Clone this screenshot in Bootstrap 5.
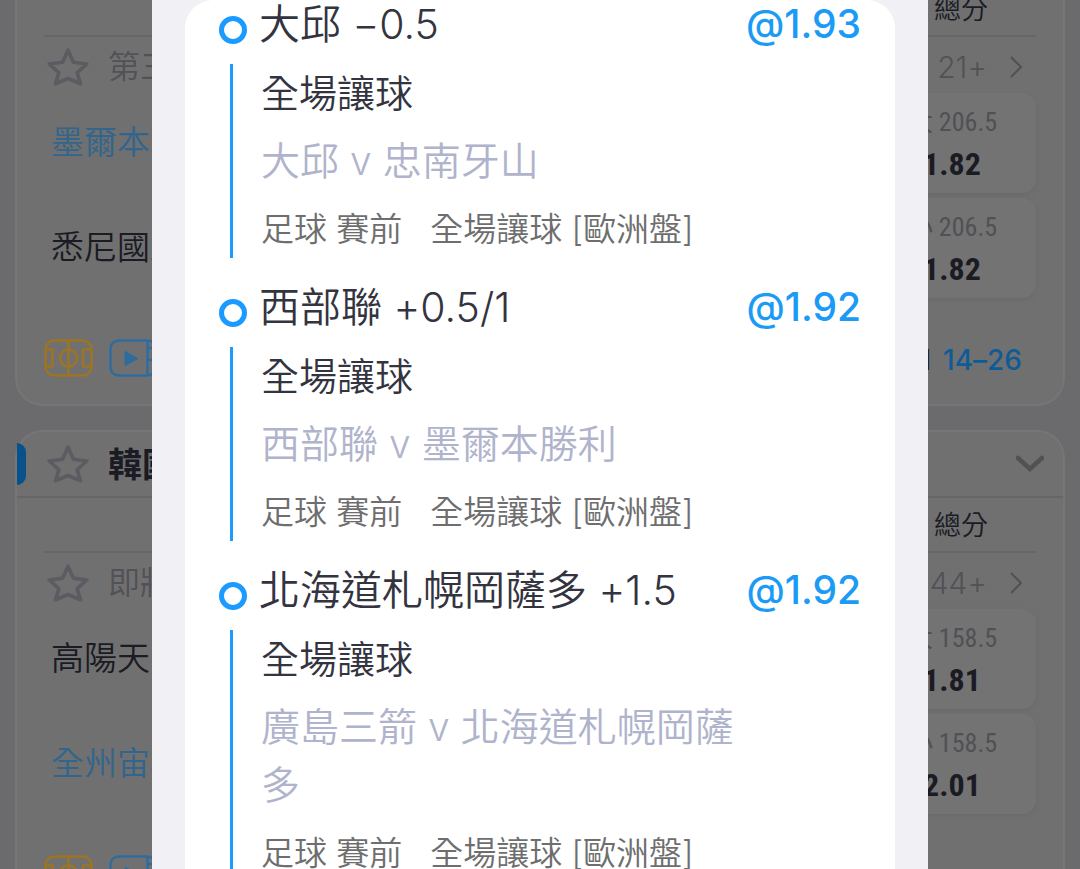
<!DOCTYPE html>
<html lang="zh-Hant">
<head>
<meta charset="utf-8">
<meta name="viewport" content="width=device-width, initial-scale=1">
<title>投注單</title>
<link href="https://cdn.jsdelivr.net/npm/bootstrap@5.3.0/dist/css/bootstrap.min.css" rel="stylesheet">
<style>
  body { font-family: Inter, "Noto Sans CJK TC", sans-serif; font-feature-settings: "calt" 0; background: #6b6b6e; color: #1b1b24; }
  .screen { height: 100vh; overflow: hidden; }
  button { background: none; border: 0; padding: 0; color: inherit; line-height: 0; }
  svg { display: block; fill: none; stroke: currentColor; }

  /* dimmed match list behind the slip */
  .league { background: #707070; border: 2px solid #767677; border-radius: 28px; margin: 0 15px; }
  .league.scrolled { margin-top: -18px; border-top: 0; border-radius: 0 0 28px 28px; }
  .league-head { height: 66px; padding-right: 19px; border-bottom: 2px solid #666668; font-size: 34px; font-weight: 700; }
  .marker { width: 9px; height: 42px; background: #07528a; border-radius: 0 10px 10px 0; margin-right: 19px; }
  .league-body { padding: 0 27px; }
  .colhead { height: 55px; border-bottom: 2px solid #666668; font-size: 27px; line-height: 55px; font-weight: 350; padding-right: 48px; text-align: right; }
  .event-row { height: 56px; padding: 4px 14px 0 1px; font-size: 32px; font-weight: 350; color: #515156; }
  .count { font-size: 30px; font-weight: 350; margin-right: 23px; }
  .star { color: #5b5b62; margin-right: 17px; }
  .team { font-size: 33px; font-weight: 350; padding-left: 7px; line-height: 98px; }
  .team.away { color: #31658c; }
  .pairs { display: grid; row-gap: 5px; }
  .oddsbox { width: 168px; height: 100px; background: #737373; border-radius: 14px; box-shadow: 0 2px 4px #6a6a6a; font-family: "Roboto Condensed", "Liberation Sans Narrow", "Noto Sans CJK TC", sans-serif; padding-top: 9px; }
  .oddsbox span { font-size: 26px; line-height: 40px; color: #505055; }
  .oddsbox strong { font-size: 32px; line-height: 44px; }
  .foot { height: 106px; padding-top: 14px; padding-right: 14px; font-size: 28px; font-weight: 500; }
  .court { color: #9c7424; margin-right: 16px; }
  .video { color: #2f6c9e; }
  .period { color: #0d5c98; }

  /* slip */
  .overlay { position: absolute; inset: 0; padding: 0 152px; overflow: hidden; }
  .slip { background: #f0f0f5; min-height: 100%; padding: 0 33px; }
  .slip-inner { background: #fff; border-radius: 28px 28px 0 0; padding: 0 34px; color: #33343f; min-height: 100vh; }
  .bet { padding-bottom: 25px; }
  .bet-title { font-size: 41px; line-height: 48px; font-weight: 350; margin-bottom: 16px; }
  .dot { width: 28px; height: 28px; border: 5px solid #1b9bff; border-radius: 50%; margin: 16px 12px 0 0; }
  .price { color: #1b9bf5; font-size: 39px; font-weight: 500; }
  .bet-body { margin-left: 11px; border-left: 3px solid #1b9bff; padding-left: 28px; display: grid; row-gap: 10px; font-size: 38px; line-height: 58px; font-weight: 350; }
  .teams { color: #b0b3cc; font-size: 39px; padding-right: 108px; }
  .meta { color: #6e6e6e; font-size: 33px; white-space: pre; }
</style>
</head>
<body>
<svg class="d-none">
  <symbol id="i-star" viewBox="0 0 44 40"><path d="M22 4l5.200 11.500 12.800 1.600-9.300 8.400 3.300 10.500-12-5-12 5 3.300-10.500L4 17.100l12.800-1.600z" stroke-width="3.500" stroke-linejoin="round"/></symbol>
  <symbol id="i-court" viewBox="0 0 49 38"><rect x="1.500" y="1.500" width="46" height="35" rx="9" stroke-width="2.500"/><path d="M24.500 2v34M2 10.500h6.500v17H2M47 10.500h-8v17h8" stroke-width="2.500"/><circle cx="24.500" cy="19" r="8.500" stroke-width="2.500"/></symbol>
  <symbol id="i-video" viewBox="0 0 56 38"><rect x="1.500" y="1.500" width="45" height="35" rx="8" stroke-width="2.500"/><path d="M38.500 2v34M39 9h9M39 21h5V12" stroke-width="2.500"/><path d="M16.500 13l11.500 6.500-11.500 6.500z" fill="currentColor" stroke-width="2" stroke-linejoin="round"/></symbol>
  <symbol id="i-next" viewBox="0 0 12 22"><path d="M1 1l10 10L1 21" stroke-width="2"/></symbol>
</svg>

<div class="screen position-relative">
  <main>
    <section class="league scrolled">
      <div class="league-body">
        <div class="colhead">總分</div>
        <div class="event-row d-flex align-items-center">
          <button class="star" aria-label="收藏"><svg width="46" height="42"><use href="#i-star"/></svg></button>
          <span>第三節</span><span class="count ms-auto">21+</span>
          <svg width="12" height="22"><use href="#i-next"/></svg>
        </div>
        <div class="pairs">
          <div class="d-flex justify-content-between"><div class="team away">墨爾本聯</div><div class="oddsbox d-flex flex-column align-items-center"><span>大 206.5</span><strong>1.82</strong></div></div>
          <div class="d-flex justify-content-between"><div class="team">悉尼國王</div><div class="oddsbox d-flex flex-column align-items-center"><span>小 206.5</span><strong>1.82</strong></div></div>
        </div>
        <div class="foot d-flex align-items-center">
          <svg class="court" width="49" height="38"><use href="#i-court"/></svg>
          <svg class="video" width="56" height="38"><use href="#i-video"/></svg>
          <span class="ms-auto me-2 pe-1 pt-1">1</span><span class="period pt-1">14–26</span>
        </div>
      </div>
    </section>

    <section class="league mt-4">
      <div class="league-head d-flex align-items-center">
        <span class="marker"></span>
        <button class="star" aria-label="收藏"><svg width="46" height="42"><use href="#i-star"/></svg></button>
        <span>韓國</span>
        <button class="ms-auto" aria-label="收合"><svg width="28" height="18" viewBox="0 0 28 18"><path d="M2 3l12 11L26 3" stroke="#525255" stroke-width="4.500" stroke-linecap="round"/></svg></button>
      </div>
      <div class="league-body">
        <div class="colhead">總分</div>
        <div class="event-row d-flex align-items-center">
          <button class="star" aria-label="收藏"><svg width="46" height="42"><use href="#i-star"/></svg></button>
          <span>即將</span><span class="count ms-auto">44+</span>
          <svg width="12" height="22"><use href="#i-next"/></svg>
        </div>
        <div class="pairs">
          <div class="d-flex justify-content-between"><div class="team">高陽天空</div><div class="oddsbox d-flex flex-column align-items-center"><span>大 158.5</span><strong>1.81</strong></div></div>
          <div class="d-flex justify-content-between"><div class="team away">全州宙斯</div><div class="oddsbox d-flex flex-column align-items-center"><span>小 158.5</span><strong>2.01</strong></div></div>
        </div>
        <div class="foot d-flex align-items-center">
          <svg class="court" width="49" height="38"><use href="#i-court"/></svg>
          <svg class="video" width="56" height="38"><use href="#i-video"/></svg>
        </div>
      </div>
    </section>
  </main>

  <div class="overlay" role="dialog" aria-label="投注單">
    <div class="slip">
      <div class="slip-inner">
        <article class="bet">
          <div class="bet-title d-flex"><span class="dot"></span><span>大邱 −0.5</span><span class="price ms-auto">@1.93</span></div>
          <div class="bet-body"><div>全場讓球</div><div class="teams">大邱 v 忠南牙山</div><div class="meta">足球 賽前   全場讓球 [歐洲盤]</div></div>
        </article>
        <article class="bet">
          <div class="bet-title d-flex"><span class="dot"></span><span>西部聯 +0.5/1</span><span class="price ms-auto">@1.92</span></div>
          <div class="bet-body"><div>全場讓球</div><div class="teams">西部聯 v 墨爾本勝利</div><div class="meta">足球 賽前   全場讓球 [歐洲盤]</div></div>
        </article>
        <article class="bet">
          <div class="bet-title d-flex"><span class="dot"></span><span>北海道札幌岡薩多 +1.5</span><span class="price ms-auto">@1.92</span></div>
          <div class="bet-body"><div>全場讓球</div><div class="teams">廣島三箭 v 北海道札幌岡薩多</div><div class="meta">足球 賽前   全場讓球 [歐洲盤]</div></div>
        </article>
      </div>
    </div>
  </div>
</div>
<script src="https://cdn.jsdelivr.net/npm/bootstrap@5.3.0/dist/js/bootstrap.bundle.min.js"></script>
</body>
</html>
